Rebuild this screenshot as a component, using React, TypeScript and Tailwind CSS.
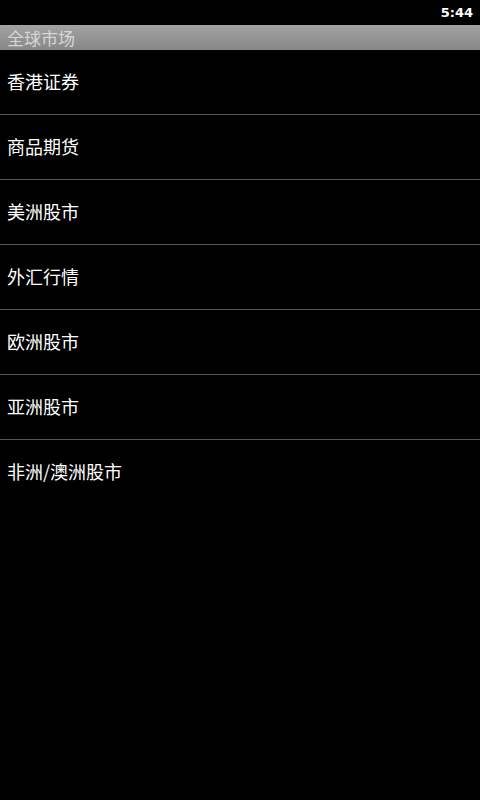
const items = ["香港证券", "商品期货", "美洲股市", "外汇行情", "欧洲股市", "亚洲股市", "非洲/澳洲股市"]

export default function App() {
  return (
    <div
      className="w-[480px] h-[800px] bg-black overflow-hidden"
      style={{ fontFamily: '"Noto Sans CJK SC", "DejaVu Sans", sans-serif' }}
    >
      <div className="h-[25px] flex items-center justify-end pr-[7px]">
        <span className="text-white text-[13px] font-bold leading-none" style={{ fontFamily: '"DejaVu Sans", sans-serif' }}>
          5:44
        </span>
      </div>
      <div className="h-[25px] flex items-center pl-[7px] bg-gradient-to-b from-[#a2a2a2] to-[#888888]">
        <span className="text-[#d6d6d6] text-[17px] leading-none">全球市场</span>
      </div>
      <div>
        {items.map((item, index) => (
          <div key={item}>
            <div className="h-[64px] flex items-center pl-[7px] pb-[2px]">
              <span className="text-white text-[18px] leading-none">{item}</span>
            </div>
            {index < items.length - 1 && <div className="h-px bg-[#555555]" />}
          </div>
        ))}
      </div>
    </div>
  )
}
